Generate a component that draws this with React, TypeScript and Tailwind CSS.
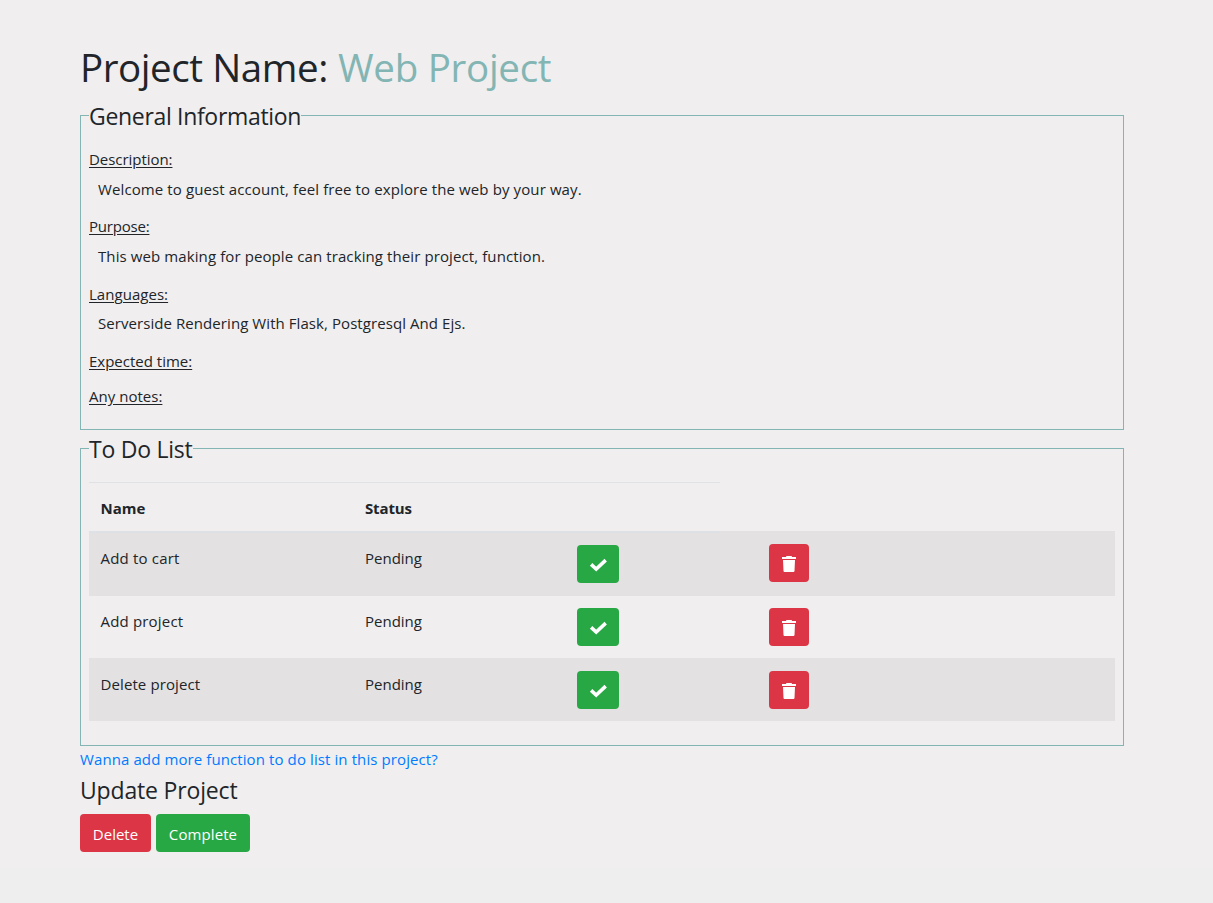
import type { ReactNode } from "react";

type Detail = { label: string; text?: string; labelClass: string; textClass?: string; className: string };

const details: Detail[] = [
  { label: "Description:", labelClass: "tracking-[-0.05px]", text: "Welcome to guest account, feel free to explore the web by your way.", textClass: "tracking-[0.11px]", className: "h-[67px]" },
  { label: "Purpose:", labelClass: "tracking-[-0.2px]", text: "This web making for people can tracking their project, function.", textClass: "tracking-[0.1px]", className: "h-[68px]" },
  { label: "Languages:", labelClass: "tracking-[0.04px]", text: "Serverside Rendering With Flask, Postgresql And Ejs.", textClass: "relative -top-px tracking-[0.07px]", className: "h-[67px]" },
  { label: "Expected time:", labelClass: "tracking-[0px]", className: "h-[35px]" },
  { label: "Any notes:", labelClass: "tracking-[0.02px]", className: "h-[24px]" },
];

const todos = [
  { name: "Add to cart", nameClass: "tracking-[0.18px]", row: "h-[63px] bg-[#e3e1e2]", text: "pt-[13px]", check: "pt-3", trash: "pt-[11px]" },
  { name: "Add project", nameClass: "tracking-[0.18px]", row: "h-[62px]", text: "pt-[13px]", check: "pt-3", trash: "pt-3" },
  { name: "Delete project", nameClass: "tracking-[0.1px]", row: "h-[63px] bg-[#e3e1e2]", text: "pt-[14px]", check: "pt-[13px]", trash: "pt-[13px]" },
];

function Panel({ title, className, children }: { title: ReactNode; className: string; children: ReactNode }) {
  return (
    <fieldset className={`w-[1044px] border border-[#82b5b3] px-2 ${className}`}>
      <legend className="h-[29px] whitespace-nowrap text-[23px] leading-[31px]">{title}</legend>
      {children}
    </fieldset>
  );
}

function CheckIcon() {
  return (
    <svg width="18" height="14" viewBox="0 0 18 14" fill="none" className="mt-[2px]">
      <path d="M2.1 6.4 7.2 11 16.7 2.1" stroke="white" strokeWidth="3.5" strokeLinecap="butt" strokeLinejoin="miter" />
    </svg>
  );
}

function TrashIcon() {
  return (
    <svg width="14" height="16" viewBox="0 0 14 16" fill="white" className="mt-0.5">
      <path d="M4 1V.8Q4 0 5 0h4q1 0 1 .8V1h4v2H0V1zM1 4h12l-.5 11q-.1 1-1 1H2.5q-.9 0-1-1z" />
    </svg>
  );
}

export default function App() {
  return (
    <div className="flex h-[903px] w-full flex-col bg-[#eeeeee] font-['Open_Sans',sans-serif] text-[15px] text-[#212529]">
      <main className="flex h-[868px] flex-col bg-[#f0eeef] pl-20 pt-11">
        <h1 className="flex h-[57px] whitespace-nowrap text-[38.5px] leading-[47px]">
          <span className="w-[258px] tracking-[-0.42px]">Project Name:</span>
          <span className="tracking-[-0.27px] text-[#82b5b3]">Web Project</span>
        </h1>

        <Panel title={<span className="tracking-[-0.32px]">General Information</span>} className="h-[329px]">
          <dl className="flex flex-col pt-[17px] leading-6">
            {details.map((d) => (
              <div key={d.label} className={`flex flex-col gap-[6px] whitespace-nowrap ${d.className}`}>
                <dt><span className={`underline underline-offset-2 ${d.labelClass}`}>{d.label}</span></dt>
                {d.text && <dd className="pl-[9px]"><span className={d.textClass}>{d.text}</span></dd>}
              </div>
            ))}
          </dl>
        </Panel>

        <Panel title={<span className="tracking-[-0.24px]">To Do List</span>} className="mt-1 h-[312px]">
          <div className="mt-[19px] flex flex-col leading-6">
            <div className="w-[631px] border-t border-[#dee2e6]" />
            <div className="grid h-12 grid-cols-[264px_212px_192px_1fr] font-bold">
              <div className="pl-[11.5px] pt-[13px]"><span>Name</span></div>
              <div className="pl-3 pt-[13px]"><span className="tracking-[-0.15px]">Status</span></div>
            </div>
            <div className="h-[2px] bg-[#e3e1e2]">
              <div className="h-full w-[631px] bg-[#dee2e6]" />
            </div>
            {todos.map((t) => (
              <div key={t.name} className={`grid grid-cols-[264px_212px_192px_1fr] ${t.row}`}>
                <div className={`pl-[11.5px] ${t.text}`}><span className={t.nameClass}>{t.name}</span></div>
                <div className={`pl-3 ${t.text}`}><span>Pending</span></div>
                <div className={`pl-3 ${t.check}`}>
                  <button aria-label="Complete task" className="flex h-[38px] w-[42px] items-center justify-center rounded bg-[#28a745]"><CheckIcon /></button>
                </div>
                <div className={`pl-3 ${t.trash}`}>
                  <button aria-label="Delete task" className="flex h-[38px] w-10 items-center justify-center rounded bg-[#dc3545]"><TrashIcon /></button>
                </div>
              </div>
            ))}
          </div>
        </Panel>

        <a href="#" className="mt-px h-7 w-fit whitespace-nowrap leading-6 tracking-[0.1px] text-[#007bff]">Wanna add more function to do list in this project?</a>
        <h2 className="h-[39px] w-fit whitespace-nowrap text-[23px] leading-[30px] tracking-[-0.17px]">Update Project</h2>
        <div className="flex gap-[5px] whitespace-nowrap text-white">
          <button className="h-[38px] w-[71px] rounded bg-[#dc3545] pt-0.5">Delete</button>
          <button className="h-[38px] w-[94px] rounded bg-[#28a745] pt-0.5 tracking-[0.1px]">Complete</button>
        </div>
      </main>
    </div>
  );
}
